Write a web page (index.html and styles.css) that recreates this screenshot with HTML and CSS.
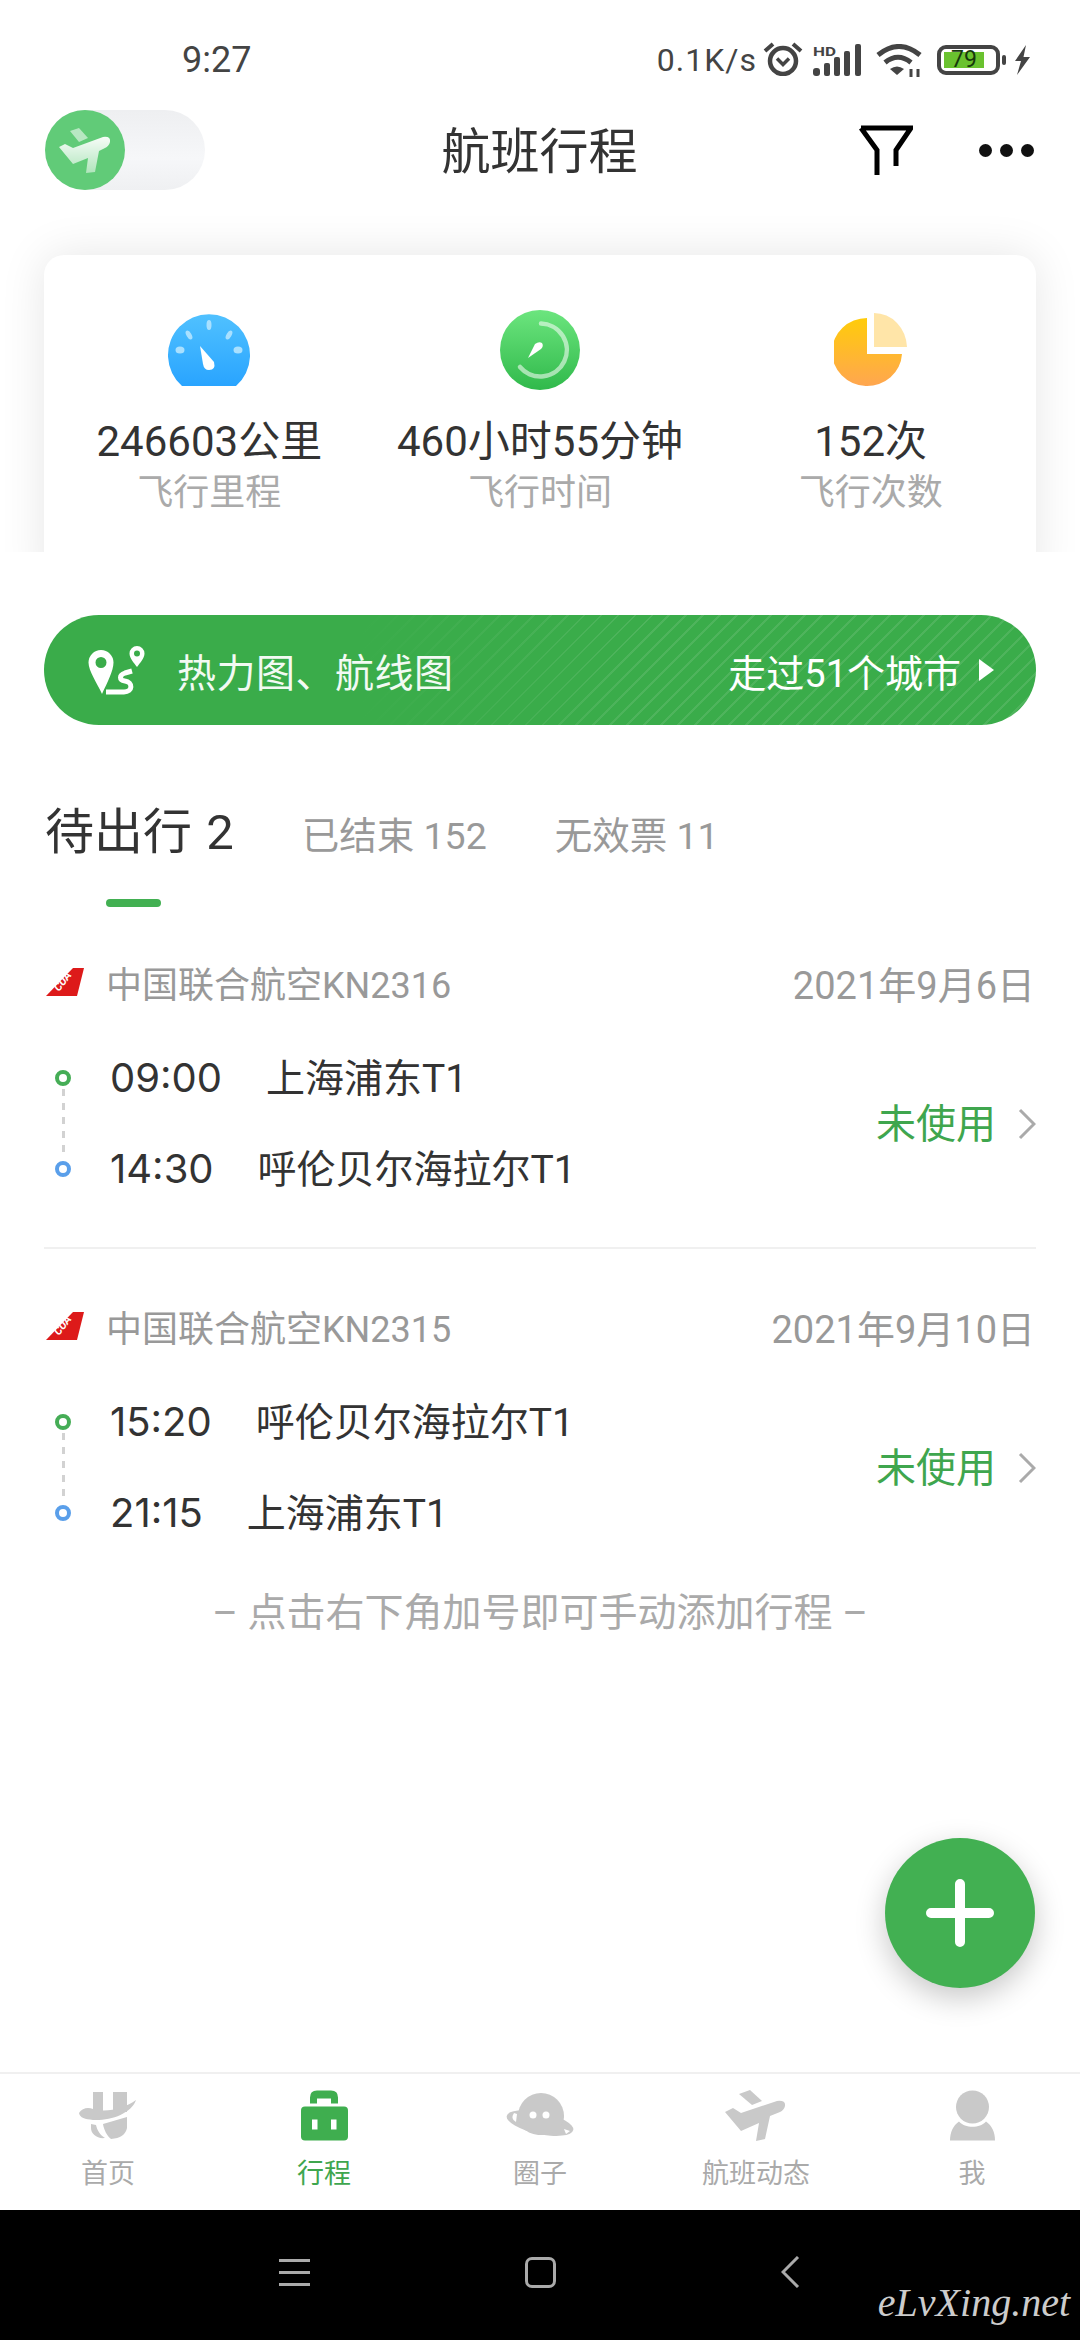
FILE: index.html
```html
<!DOCTYPE html>
<html lang="zh-CN">

<head>
  <meta charset="utf-8">
  <title>航班行程</title>
  <link rel="stylesheet" href="styles.css">
</head>

<body>
  <div class="page">
    <div class="statusbar">
      <span class="clock">9:27</span>
      <div class="status-right">
        <span class="speed">0.1K/s</span>
        <svg class="st-alarm" width="40" height="35" viewBox="0 0 40 35" fill="none" stroke="#444">
          <circle cx="20" cy="20" r="13" stroke-width="4.5"/>
          <path d="M14 17.5L20 23.5L26 17.5" stroke-width="3.5"/>
          <path d="M2 10L10 3M38 10L30 3" stroke-width="4"/>
        </svg>
        <svg class="st-signal" width="50" height="32" viewBox="0 0 50 32" fill="#444">
          <text class="hd" x="0" y="12" textLength="23" lengthAdjust="spacingAndGlyphs">HD</text>
          <rect x="0" y="24" width="7" height="8" rx="3"/>
          <rect x="11" y="19" width="6" height="13" rx="2"/>
          <rect x="21" y="13" width="6" height="19" rx="2"/>
          <rect x="31" y="7" width="6" height="25" rx="2"/>
          <rect x="42" y="0" width="6" height="32" rx="2"/>
        </svg>
        <svg class="st-wifi" width="46" height="33" viewBox="0 0 46 33" fill="none" stroke="#444">
          <path d="M2 11Q23 -6 44 11" stroke-width="5"/>
          <path d="M9 18.5Q22 8 35 18.5" stroke-width="5"/>
          <path d="M14 25Q21 20 28 25L21 31Z" fill="#444" stroke="none"/>
          <path d="M35 33V25M42 33V25" stroke-width="3"/>
        </svg>
        <div class="battery">
          <div class="battery-body"><span class="battery-level">79</span></div>
          <div class="battery-nub"></div>
        </div>
        <svg class="st-bolt" width="17" height="30" viewBox="0 0 17 30" fill="#444">
          <path d="M12 0L1 16H7L3 30L16 12H9.500Z"/>
        </svg>
      </div>
    </div>

    <div class="header">
      <div class="toggle">
        <div class="toggle-knob">
          <svg width="80" height="80" viewBox="0 0 80 80">
            <defs>
              <linearGradient id="planeFill" x1="0" y1="0" x2="0" y2="1">
                <stop offset="0" stop-color="#fff" stop-opacity=".95"/>
                <stop offset="1" stop-color="#fff" stop-opacity=".5"/>
              </linearGradient>
            </defs>
            <path fill="url(#planeFill)" d="M14 37L20 34L28 38L58 27Q66 26 65 32Q64 36 60 38L54 41L50 62L41 63L43 48L28 54Z"/>
            <path fill="#fff" fill-opacity=".55" d="M25 21L34 18L43 28L34 32Z"/>
          </svg>
        </div>
      </div>
      <div class="title">航班行程</div>
      <div class="header-actions">
        <svg width="54" height="50" viewBox="0 0 54 50" fill="none" stroke="#000" stroke-width="5">
          <path d="M2 3H52L37 25V41M2 3L18 25V50"/>
        </svg>
        <div class="more"><i></i><i></i><i></i></div>
      </div>
    </div>

    <div class="stats-wrap">
      <div class="stats">
        <div class="stat">
          <svg class="stat-icon" width="82" height="80" viewBox="0 0 82 80">
            <defs>
              <linearGradient id="gaugeFill" x1="0" y1="0" x2="0" y2="1">
                <stop offset="0" stop-color="#50c1ff"/>
                <stop offset="1" stop-color="#29a4ff"/>
              </linearGradient>
            </defs>
            <path fill="url(#gaugeFill)" d="M14 76A41 41 0 1 1 68 76Z"/>
            <g fill="#a9e0ff">
              <ellipse cx="41" cy="15" rx="2.500" ry="5"/>
              <ellipse cx="21" cy="25" rx="2.500" ry="5" transform="rotate(-30 21 25)"/>
              <ellipse cx="61" cy="25" rx="2.500" ry="5" transform="rotate(30 61 25)"/>
              <ellipse cx="12" cy="40" rx="4.500" ry="3.500"/>
              <ellipse cx="70" cy="40" rx="4.500" ry="3.500"/>
            </g>
            <path fill="#fff" d="M32 36L46 52Q48 60 41 60Q36 60 35 54Z"/>
          </svg>
          <div class="stat-value">246603公里</div>
          <div class="stat-label">飞行里程</div>
        </div>
        <div class="stat">
          <svg class="stat-icon" width="80" height="80" viewBox="0 0 80 80">
            <defs>
              <linearGradient id="clockFill" x1="0" y1="0" x2="0" y2="1">
                <stop offset="0" stop-color="#6ce57e"/>
                <stop offset="1" stop-color="#30b94b"/>
              </linearGradient>
            </defs>
            <circle cx="40" cy="40" r="40" fill="url(#clockFill)"/>
            <path fill="none" stroke="#fff" stroke-opacity=".55" stroke-width="4.500" stroke-linecap="round" d="M41 13.500A26.500 26.500 0 1 1 20 57"/>
            <path fill="#fff" d="M28 48L35 34Q39 31 42 33Q44 36 41 39Z"/>
          </svg>
          <div class="stat-value">460小时55分钟</div>
          <div class="stat-label">飞行时间</div>
        </div>
        <div class="stat">
          <svg class="stat-icon" width="74" height="80" viewBox="0 0 74 80">
            <defs>
              <linearGradient id="pieFill" x1="0" y1="0" x2="0" y2="1">
                <stop offset="0" stop-color="#ffcc0a"/>
                <stop offset="1" stop-color="#ffa650"/>
              </linearGradient>
            </defs>
            <path fill="url(#pieFill)" d="M33 8V44H68A35 34 0 1 1 33 8Z"/>
            <path fill="#ffe5a8" d="M40 3A33 35 0 0 1 73 37H40Z"/>
          </svg>
          <div class="stat-value">152次</div>
          <div class="stat-label">飞行次数</div>
        </div>
      </div>
    </div>

    <div class="banner">
      <svg width="58" height="51" viewBox="0 0 58 51" fill="#fff">
        <path fill-rule="evenodd" d="M13 5A12.500 12.500 0 0 1 25.500 17.500C25.500 26 19 38 14 49C9 38 .5 26 .5 17.500A12.500 12.500 0 0 1 13 5ZM13 12A5.500 5.500 0 1 0 13 23A5.500 5.500 0 0 0 13 12Z"/>
        <path fill-rule="evenodd" d="M49 1A7.500 7.500 0 0 1 56.500 8.500C56.500 13 52 18 49 22C46 18 41.500 13 41.500 8.500A7.500 7.500 0 0 1 49 1ZM49 5.500A3 3 0 1 0 49 11.500A3 3 0 0 0 49 5.500Z"/>
        <path fill="none" stroke="#fff" stroke-width="5" d="M18 47H36C45 47 45 37 37 36C31 35 31 30 37 28L44 26"/>
      </svg>
      <span class="banner-title">热力图、航线图</span>
      <span class="banner-more">走过51个城市</span>
      <span class="banner-arrow"></span>
    </div>

    <div class="tabs">
      <span class="tab tab-on">待出行 2</span>
      <span class="tab">已结束 152</span>
      <span class="tab">无效票 11</span>
    </div>
    <div class="tab-line"></div>

    <div class="flight">
      <div class="flight-top">
        <svg class="logo" width="38" height="28" viewBox="0 0 38 28">
          <path fill="#dd1a1a" d="M27 0H38L31 28H0Z"/>
          <text class="logo-text" transform="translate(13 24) rotate(-52)">CUA</text>
        </svg>
        <span class="airline">中国联合航空KN2316</span>
        <span class="date">2021年9月6日</span>
      </div>
      <div class="flight-body">
        <div class="route-line">
          <div class="dot dot-green"></div>
          <div class="dash"></div>
          <div class="dot dot-blue"></div>
        </div>
        <div class="stops">
          <div class="stop"><span class="time">09:00</span><span class="place">上海浦东T1</span></div>
          <div class="stop"><span class="time">14:30</span><span class="place">呼伦贝尔海拉尔T1</span></div>
        </div>
        <span class="state">未使用</span>
        <svg class="chev" width="18" height="32" viewBox="0 0 18 32" fill="none" stroke="#aaa" stroke-width="3">
          <path d="M2 2L16 16L2 30"/>
        </svg>
      </div>
    </div>

    <div class="flight flight-last">
      <div class="flight-top">
        <svg class="logo" width="38" height="28" viewBox="0 0 38 28">
          <path fill="#dd1a1a" d="M27 0H38L31 28H0Z"/>
          <text class="logo-text" transform="translate(13 24) rotate(-52)">CUA</text>
        </svg>
        <span class="airline">中国联合航空KN2315</span>
        <span class="date">2021年9月10日</span>
      </div>
      <div class="flight-body">
        <div class="route-line">
          <div class="dot dot-green"></div>
          <div class="dash"></div>
          <div class="dot dot-blue"></div>
        </div>
        <div class="stops">
          <div class="stop"><span class="time">15:20</span><span class="place">呼伦贝尔海拉尔T1</span></div>
          <div class="stop"><span class="time">21:15</span><span class="place">上海浦东T1</span></div>
        </div>
        <span class="state">未使用</span>
        <svg class="chev" width="18" height="32" viewBox="0 0 18 32" fill="none" stroke="#aaa" stroke-width="3">
          <path d="M2 2L16 16L2 30"/>
        </svg>
      </div>
    </div>

    <div class="hint">– 点击右下角加号即可手动添加行程 –</div>

    <div class="fab">
      <svg width="68" height="68" viewBox="0 0 68 68" stroke="#fff" stroke-width="10" stroke-linecap="round">
        <path d="M34 5V63M5 34H63"/>
      </svg>
    </div>

    <div class="tabbar">
      <div class="tabbar-item">
        <svg width="58" height="47" viewBox="0 0 58 47" fill="#c9c9c9">
          <rect x="14" y="0" width="10" height="20"/>
          <rect x="34" y="0" width="14" height="20"/>
          <path d="M0 21C3 16 9 15 14 17C28 21 46 16 57 8C52 22 31 29 14 28C6 27 1 26 0 21Z"/>
          <path d="M12 32L17 33C18 38 21 43 26 46C18 47 12 42 12 36Z"/>
          <path d="M24 32L48 25V36Q46 46 32 47C28 44 25 38 24 32Z"/>
        </svg>
        <span class="tabbar-text">首页</span>
      </div>
      <div class="tabbar-item tabbar-on">
        <svg width="47" height="50" viewBox="0 0 47 50" fill="#3fae4f">
          <path d="M9 13V7Q9 0 16 0H30Q37 0 37 7V13H30V8H16V13Z"/>
          <rect x="0" y="16" width="47" height="34" rx="4"/>
          <rect x="11" y="29" width="5.500" height="10" fill="#fff"/>
          <rect x="30" y="29" width="5.500" height="10" fill="#fff"/>
        </svg>
        <span class="tabbar-text">行程</span>
      </div>
      <div class="tabbar-item">
        <svg width="68" height="45" viewBox="0 0 68 45" fill="#c9c9c9">
          <ellipse cx="34" cy="30" rx="34" ry="11" transform="rotate(12 34 30)"/>
          <path d="M12 23A23 23 0 0 1 58 23C58 32 50 42 35 42C20 42 12 32 12 23Z"/>
          <path fill="#fff" d="M8 20Q4 26 10 29L11 21Z"/>
          <path fill="#fff" d="M58 36L64 38L60 41Z"/>
          <circle cx="27" cy="22" r="3.500" fill="#fff"/>
          <circle cx="40" cy="22" r="3.500" fill="#fff"/>
        </svg>
        <span class="tabbar-text">圈子</span>
      </div>
      <div class="tabbar-item">
        <svg width="62" height="51" viewBox="0 0 62 51" fill="#c9c9c9">
          <path d="M0 22L8 18L16 23L52 11Q61 10 60 16Q59 20 55 22L45 26L40 49L31 51L34 33L16 41Z"/>
          <path d="M14 4L25 0L37 11L27 15Z"/>
        </svg>
        <span class="tabbar-text">航班动态</span>
      </div>
      <div class="tabbar-item">
        <svg width="45" height="50" viewBox="0 0 45 50" fill="#c9c9c9">
          <circle cx="22.500" cy="16.500" r="16.500"/>
          <path d="M0 50C0 42 3 35 9 31C15 38 30 38 36 31C42 35 45 42 45 50Z"/>
        </svg>
        <span class="tabbar-text">我</span>
      </div>
    </div>

    <div class="navbar">
      <div class="nav-menu"><i></i><i></i><i></i></div>
      <div class="nav-home"></div>
      <svg class="nav-back" width="19" height="32" viewBox="0 0 19 32" fill="none" stroke="#aaa" stroke-width="3">
        <path d="M17 1L2 16L17 31"/>
      </svg>
      <span class="watermark">eLvXing.net</span>
    </div>
  </div>
</body>

</html>
```

FILE: styles.css
```css
* {
  box-sizing: border-box;
}

body {
  margin: 0;
  background: #fff;
  font-family: Roboto, "Noto Sans CJK SC", sans-serif;
  color: #333;
}

.page {
  position: relative;
  width: 1080px;
  height: 2340px;
  overflow: hidden;
  display: flex;
  flex-direction: column;
}

/* status bar */
.statusbar {
  display: flex;
  justify-content: space-between;
  align-items: center;
  height: 40px;
  margin-top: 40px;
  padding: 0 49px 0 182px;
  font-size: 36px;
  color: #444;
}

.status-right {
  display: flex;
  align-items: center;
}

.speed {
  font-size: 32px;
  letter-spacing: 1px;
}

.st-alarm {
  margin: -4px 0 0 6px;
}

.st-signal {
  margin: 0 0 0 10px;
}

.hd {
  font-size: 13px;
  font-weight: 700;
}

.st-wifi {
  margin-left: 13px;
}

.battery {
  display: flex;
  align-items: center;
  margin-left: 15px;
}

.battery-body {
  width: 63px;
  height: 30px;
  padding: 3px;
  border: 4px solid #444;
  border-radius: 9px;
}

.battery-level {
  display: block;
  width: 40px;
  height: 16px;
  background: #6ac22f;
  font-size: 23px;
  line-height: 16px;
  text-align: center;
  color: #16380c;
}

.battery-nub {
  width: 4px;
  height: 10px;
  margin-left: 2px;
  border-radius: 2px;
  background: #444;
}

.st-bolt {
  margin-left: 8px;
}

/* header */
.header {
  display: grid;
  grid-template-columns: 1fr auto 1fr;
  align-items: center;
  height: 80px;
  margin-top: 30px;
  padding: 0 46px 0 45px;
}

.toggle {
  width: 160px;
  height: 80px;
  border-radius: 40px;
  background: linear-gradient(180deg, #eeeff1, #f6f7f9 60%, #eff0f2);
}

.toggle-knob {
  width: 80px;
  height: 80px;
  border-radius: 50%;
  background: #61cb78;
}

.toggle-knob svg {
  display: block;
}

.title {
  padding-top: 5px;
  font-size: 49px;
  line-height: 75px;
}

.header-actions {
  display: flex;
  justify-content: flex-end;
  align-items: center;
  gap: 66px;
}

.more {
  display: flex;
  gap: 8px;
}

.more i {
  width: 13px;
  height: 13px;
  border-radius: 50%;
  background: #111;
}

/* summary card, cut off at the bottom */
.stats-wrap {
  height: 362px;
  padding: 65px 44px 0;
  overflow: hidden;
}

.stats {
  display: grid;
  grid-template-columns: repeat(3, 1fr);
  height: 340px;
  padding-top: 55px;
  border-radius: 20px;
  background: #fff;
  box-shadow: 0 0 46px rgba(0, 0, 0, .1);
}

.stat {
  display: flex;
  flex-direction: column;
  align-items: center;
}

.stat-icon {
  display: block;
}

.stat-value {
  margin-top: 27px;
  font-size: 42px;
  line-height: 50px;
  white-space: nowrap;
}

.stat-label {
  margin-top: 4px;
  font-size: 36px;
  line-height: 44px;
  color: #aaa;
}

/* heat map banner */
.banner {
  display: flex;
  align-items: center;
  height: 110px;
  margin: 63px 44px 0;
  padding: 0 42px 0 44px;
  border-radius: 55px;
  color: #fff;
  font-size: 38px;
  background:
    linear-gradient(90deg, #3aac4a 32%, rgba(58, 172, 74, 0) 60%),
    repeating-linear-gradient(-45deg, rgba(255, 255, 255, .1) 0 2px, transparent 2px 12px),
    #3aac4a;
}

.banner svg {
  flex: none;
}

.banner-title {
  margin-left: 31px;
  font-size: 39px;
  letter-spacing: .5px;
  color: #f2faf3;
}

.banner-more {
  margin-left: auto;
}

.banner-arrow {
  width: 0;
  height: 0;
  margin-left: 18px;
  border-left: 15px solid #fff;
  border-top: 11px solid transparent;
  border-bottom: 11px solid transparent;
}

/* tabs */
.tabs {
  display: flex;
  align-items: baseline;
  gap: 68px;
  margin-top: 78px;
  padding-left: 45px;
  line-height: 60px;
}

.tab {
  font-size: 37.5px;
  color: #999;
}

.tab-on {
  font-size: 49px;
  word-spacing: 2px;
  color: #333;
}

.tab-line {
  width: 55px;
  height: 8px;
  margin: 33px 0 -2px 106px;
  border-radius: 4px;
  background: #42b052;
}

/* flight rows */
.flight {
  margin: 0 44px;
  padding: 52px 0 53px;
  border-bottom: 2px solid #f0f0f0;
}

.flight-last {
  padding-bottom: 0;
  border-bottom: 0;
}

.flight-top {
  display: flex;
  align-items: center;
  height: 50px;
}

.logo {
  margin-left: 2px;
}

.logo-text {
  font-size: 11px;
  font-weight: 700;
  font-style: italic;
  fill: #fff;
}

.airline {
  margin-left: 22px;
  font-size: 36px;
  color: #999;
}

.date {
  margin-left: auto;
  margin-right: 1px;
  font-size: 38px;
  color: #999;
}

.flight-body {
  display: flex;
  align-items: center;
  margin-top: 46px;
}

.route-line {
  display: flex;
  flex-direction: column;
  align-items: center;
  width: 16px;
  height: 107px;
  margin: 0 39px 0 11px;
}

.dot {
  flex: none;
  width: 16px;
  height: 16px;
  border-radius: 50%;
  background: #fff;
}

.dot-green {
  border: 4px solid #45ad56;
}

.dot-blue {
  border: 4px solid #5a9fea;
}

.dash {
  flex: 1;
  width: 3px;
  margin: 3px 0;
  background: repeating-linear-gradient(180deg, #d2d2d2 0 7px, transparent 7px 14px);
}

.stops {
  display: flex;
  flex-direction: column;
  gap: 41px;
}

.stop {
  display: flex;
  align-items: baseline;
  gap: 44px;
  height: 50px;
  line-height: 50px;
}

/* Inter has a narrow 1, the times in the app are not tabular */
.time {
  font-family: Inter, Roboto, sans-serif;
  font-size: 40px;
}

.place {
  font-size: 39px;
}

.state {
  margin-left: auto;
  padding-bottom: 5px;
  font-size: 40px;
  color: #3fa64e;
}

.chev {
  margin-left: 22px;
}

.hint {
  margin-top: 50px;
  font-size: 39px;
  line-height: 50px;
  text-align: center;
  color: #aaa;
}

/* floating add button */
.fab {
  position: absolute;
  right: 45px;
  bottom: 352px;
  display: flex;
  justify-content: center;
  align-items: center;
  width: 150px;
  height: 150px;
  border-radius: 50%;
  background: #42b052;
  box-shadow: 0 10px 30px rgba(0, 0, 0, .22);
}

/* bottom tabs */
.tabbar {
  display: grid;
  grid-template-columns: repeat(5, 1fr);
  height: 138px;
  margin-top: auto;
  padding-top: 16px;
  border-top: 2px solid #f0f0f0;
}

.tabbar-item {
  display: flex;
  flex-direction: column;
  align-items: center;
}

.tabbar-item svg {
  display: block;
  height: 51px;
  margin-bottom: 15px;
}

.tabbar-text {
  font-size: 27px;
  line-height: 36px;
  color: #aaa;
}

.tabbar-on .tabbar-text {
  color: #3fa64e;
}

/* system navigation */
.navbar {
  position: relative;
  display: flex;
  align-items: center;
  gap: 215px;
  height: 130px;
  padding: 0 0 6px 279px;
  background: #000;
}

.nav-menu {
  display: flex;
  flex-direction: column;
  gap: 9px;
}

.nav-menu i {
  display: block;
  width: 31px;
  height: 3px;
  background: #aaa;
}

.nav-home {
  width: 31px;
  height: 31px;
  border: 3px solid #aaa;
  border-radius: 7px;
}

.nav-back {
  margin-left: 10px;
}

.watermark {
  position: absolute;
  right: 10px;
  bottom: 14px;
  font-family: "Liberation Serif", serif;
  font-size: 40px;
  font-style: italic;
  color: #ccc;
}
```
